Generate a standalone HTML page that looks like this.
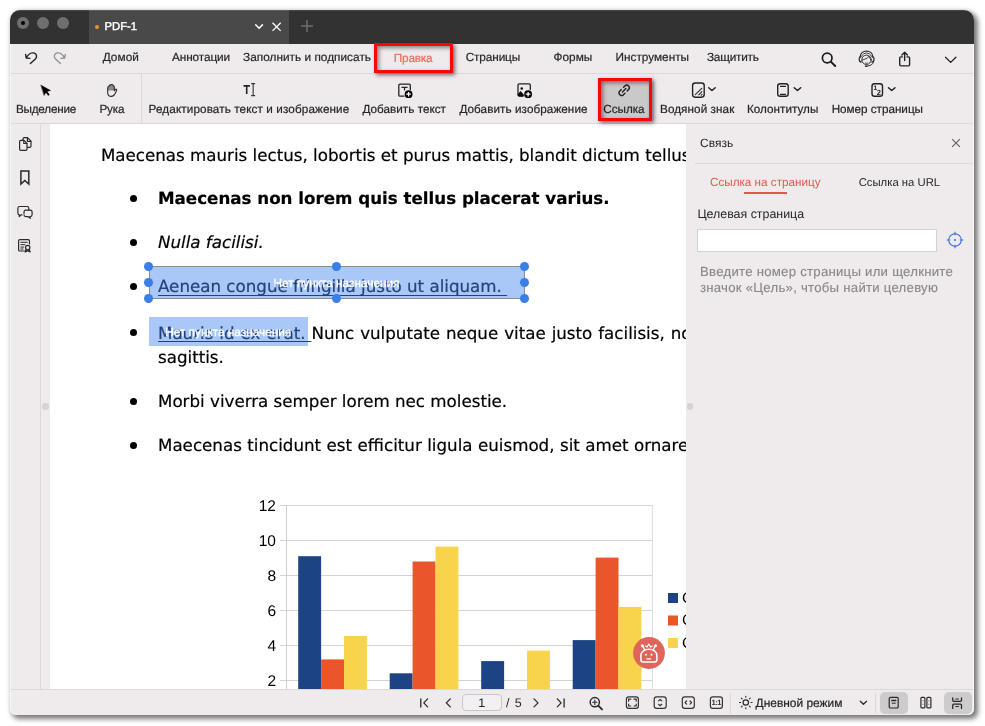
<!DOCTYPE html>
<html lang="ru">
<head>
<meta charset="utf-8">
<title>PDF-1</title>
<style>
*{box-sizing:border-box;margin:0;padding:0}
html,body{width:985px;height:726px;overflow:hidden;background:#fff}
body{text-rendering:geometricPrecision;font-family:"Liberation Sans",sans-serif;font-size:13px;color:#1d1d1d;position:relative}
.abs{position:absolute}
#win{will-change:transform;position:absolute;left:10px;top:10px;width:963.600px;height:705px;border-radius:10px 10px 6px 6px;background:#efebec;box-shadow:3px 3px 5px 1px rgba(0,0,0,.5),0 0 6px rgba(0,0,0,.1);overflow:hidden}
#title{position:absolute;left:0;top:0;width:964px;height:33.600px;background:#323232}
#tab{position:absolute;left:79px;top:0;width:200.200px;height:33.600px;background:#494949}
.tl{position:absolute;top:7.4px;width:12px;height:12px;border-radius:50%;background:#6f6f6f}
#menu{position:absolute;left:0;top:34px;width:964px;height:29px;background:#efebec}
.mi{position:absolute;top:0;height:29px;line-height:27px;font-size:11.800px;color:#262626;-webkit-text-stroke:.2px currentColor;white-space:nowrap;transform:translateX(-50%)}
#tools{position:absolute;left:0;top:63px;width:964px;height:51px;border-top:1px solid #dcd8d9;border-bottom:1px solid #dcd8d9;background:#efebec}
.tb{position:absolute;top:0;height:49px;width:0;font-size:11.700px;color:#262626;-webkit-text-stroke:.2px #262626}
.tb span{position:absolute;left:0;top:27.700px;line-height:16px;white-space:nowrap;transform:translateX(-50%)}
.tb svg{position:absolute;left:0;top:0;overflow:visible}
#side{position:absolute;left:0;top:114px;width:31px;height:565px;border-right:1px solid #dcd8d9}
#page{position:absolute;left:40px;top:114px;width:636px;height:565px;background:#fff;overflow:hidden}
#panel{position:absolute;left:676px;top:114px;width:288px;height:565px;background:#efebec}
#bottom{position:absolute;left:0;top:679px;width:964px;height:26px;background:#efebec;border-top:1px solid #dcd8d9}
.doc{font-family:"DejaVu Sans","Liberation Sans",sans-serif;text-rendering:geometricPrecision;-webkit-text-stroke:.2px currentColor;font-size:16.710px;color:#000;white-space:nowrap;position:absolute;line-height:20px}
.bul{position:absolute;width:7px;height:7px;border-radius:50%;background:#000;left:80px}
.lnk{color:#24427a;text-decoration:underline;text-decoration-thickness:1px;text-underline-offset:2px}
.hd{position:absolute;width:9px;height:9px;border-radius:50%;background:#3b7de9}
.np{position:absolute;color:#fff;-webkit-text-stroke:.3px #fff;font-size:11.800px;white-space:nowrap;line-height:13px;text-align:center}
</style>
</head>
<body>
<div id="win">
  <div id="title">
    <div class="tl" style="left:7.3px"></div>
    <div class="abs" style="left:11.3px;top:11.4px;width:4px;height:4px;border-radius:50%;background:#000"></div>
    <div class="tl" style="left:27.1px"></div>
    <div class="tl" style="left:47px"></div>
    <div id="tab">
      <div class="abs" style="left:5.6px;top:14.6px;width:4px;height:4px;border-radius:50%;background:#f0922e"></div>
      <div class="abs" style="left:15.500px;top:8.500px;font-size:11.300px;color:#fff;-webkit-text-stroke:.4px #fff;line-height:16px">PDF-1</div>
    </div>
    <div class="abs" style="left:0;top:0;width:964px;height:1px;background:rgba(255,255,255,.11)"></div>
    <svg class="abs" style="left:0;top:0" width="964" height="34" viewBox="10 10 964 34" fill="none">
      <path d="M255.3 24.4 L259.1 28.2 L262.9 24.4" stroke="#fff" stroke-width="1.5"/>
      <path d="M272.5 22.7 L280.7 30.9 M280.7 22.7 L272.5 30.9" stroke="#fff" stroke-width="1.3"/>
      <path d="M307 20 V32 M301 26 H313" stroke="#6e6e6e" stroke-width="1.5"/>
    </svg>
  </div>

  <div id="menu">
    <svg class="abs" style="left:0;top:0" width="964" height="29" viewBox="10 44 964 29" fill="none" stroke-linecap="round" stroke-linejoin="round">
      <path d="M25.6 54.4 L26.2 58.0 L29.8 58.4 M26.4 57.8 C28.5 53.5 32.0 52.2 34.5 53.2 C36.8 54.2 37.2 57.0 35.6 58.8 L30.4 63.6" stroke="#222" stroke-width="1.400"/>
      <path d="M65.3 54.4 L64.7 58.0 L61.1 58.4 M64.5 57.8 C62.4 53.5 58.9 52.2 56.4 53.2 C54.1 54.2 53.7 57.0 55.3 58.8 L60.5 63.6" stroke="#8f8f8f" stroke-width="1.300"/>
      <circle cx="827.2" cy="58" r="4.8" stroke="#1c1c1c" stroke-width="1.7"/>
      <path d="M830.8 61.6 L835.2 66" stroke="#1c1c1c" stroke-width="2"/>
      <g stroke="#333" stroke-width="1">
        <circle cx="866.500" cy="59.800" r="4.700"/>
        <path d="M860.200 56.800 C860.600 49.200 872.400 49.200 872.800 56.800" stroke-width="1.300"/>
        <path d="M861.800 56 C863 52 870 52 871.200 56" stroke-width=".9"/>
        <path d="M861.100 56.600 C858.600 56.600 858.600 62 861.100 62 M871.900 56.600 C874.700 56.600 874.700 62 871.900 62" stroke-width="1.300"/>
        <path d="M862 60.200 L867.300 58.200 L868.700 56.200 L869.800 57.800 L870.900 60" stroke-width=".9"/>
        <path d="M873.500 62.200 C872.800 64.800 870 65.800 867 66.200" stroke-width="1"/>
        <path d="M865.300 62.900 C866 63.600 867.200 63.600 867.900 62.900" stroke-width=".9"/>
      </g>
      <ellipse cx="866.100" cy="66.200" rx="1.300" ry=".9" fill="#333" stroke="none"/>
      <g stroke="#222" stroke-width="1.4">
        <path d="M902.3 56.9 H901 Q899.700 56.9 899.700 58.2 V64.6 Q899.700 65.9 901 65.9 H908.3 Q909.6 65.9 909.6 64.6 V58.2 Q909.6 56.9 908.3 56.900 H907"/>
        <path d="M904.650 60.5 V52.300 M901.9 54.9 L904.650 52.200 L907.4 54.900"/>
      </g>
      <path d="M945.5 57.200 L950.7 62.4 L955.9 57.200" stroke="#222" stroke-width="1.3"/>
    </svg>
    <div class="mi" style="left:110.8px;letter-spacing:0.069px">Домой</div>
    <div class="mi" style="left:191.0px;letter-spacing:-0.109px">Аннотации</div>
    <div class="mi" style="left:297.0px;letter-spacing:0.029px">Заполнить и подписать</div>
    <div class="mi" style="left:403.1px;letter-spacing:-0.21px;color:#e66c60;top:.7px">Правка</div>
    <div class="mi" style="left:482.9px;letter-spacing:-0.125px">Страницы</div>
    <div class="mi" style="left:562.9px;letter-spacing:0.062px">Формы</div>
    <div class="mi" style="left:642.3px;letter-spacing:0.002px">Инструменты</div>
    <div class="mi" style="left:722.8px;letter-spacing:-0.23px">Защитить</div>
  </div>

  <div id="tools">
    <div class="abs" style="left:131px;top:0;width:1px;height:49px;background:#dcd8d9"></div>
    <div class="abs" style="left:590px;top:5px;width:50px;height:40px;background:#c9c9c9"></div>
    <div class="abs" style="left:643px;top:0;width:1px;height:49px;background:#e3dfe0"></div>
    <svg class="abs" style="left:0;top:0" width="964" height="49" viewBox="10 74 964 49" fill="none" stroke="#222" stroke-width="1.3" stroke-linecap="round" stroke-linejoin="round" font-family="'Liberation Sans',sans-serif">
      <!-- select arrow -->
      <path d="M41.100 85.200 L50.500 90.500 L46.400 91.500 L44.200 95.200 Z" fill="#000" stroke="#000" stroke-width=".5"/>
      <path d="M46.300 91.600 L48.900 95.200" stroke="#000" stroke-width="1.900" stroke-linecap="butt"/>
      <!-- hand -->
      <path d="M108.200 90.600 H114.300 V87.300 Q114.300 86 113.200 85.700 Q112.600 84.500 111.300 84.600 Q110 84.600 109.500 85.500 Q107.700 86.300 107.700 88 V90.600 Z" fill="#8a8a8a" stroke="none"/>
      <path d="M107.700 88 Q107.700 86.500 109 86 L109.500 85.500 Q110 84.600 111.300 84.600 Q112.600 84.400 113.200 85.600 Q114.300 86 114.300 87.300 V90.800 L115.300 89.500 Q116 88.800 116.600 89.500 Q117 90.200 116.300 91.200 L114.600 94.400 Q113.400 96.400 111.300 96.400 Q107.700 96.400 107.700 92.500 Z" stroke-width="1.100" stroke="#2a2a2a"/>
      <!-- T| -->
      <path d="M243.500 85.900 H249.900 M246.700 85.900 V93.900" stroke-width="1.6" stroke-linecap="butt"/>
      <path d="M251.200 83.600 H255.100 M251.200 95.600 H255.100 M253.150 83.600 V95.600" stroke-width="1.1" stroke="#333" stroke-linecap="butt"/>
      <!-- add text -->
      <path d="M404 96.100 H400 Q398.800 96.100 398.800 94.900 V85.400 Q398.800 84.200 400 84.200 H409.100 Q410.300 84.200 410.300 85.400 V89.500"/>
      <path d="M401.500 87.300 H407.600 M404.550 87.300 V90.600" stroke-width="1.2" stroke-linecap="butt"/>
      <circle cx="408.600" cy="94.200" r="3.9" fill="#000" stroke="none"/>
      <path d="M406.300 94.200 H410.900 M408.600 91.900 V96.500" stroke="#fff" stroke-width="1.3" stroke-linecap="butt"/>
      <!-- add image -->
      <path d="M523 96.100 H519.300 Q518 96.100 518 94.800 V85.100 Q518 83.800 519.300 83.800 H529 Q530.300 83.800 530.300 85.100 V89.500"/>
      <path d="M518.200 94.200 L520.600 91.500 L523.300 94.600 L523.300 96 H519.200 Q518.200 96 518.200 95 Z" fill="#000" stroke="#000" stroke-width=".8"/>
      <circle cx="521.700" cy="88.400" r="1.25" fill="#000" stroke="none"/>
      <circle cx="528.100" cy="94.200" r="3.9" fill="#000" stroke="none"/>
      <path d="M525.800 94.200 H530.400 M528.100 91.900 V96.500" stroke="#fff" stroke-width="1.3" stroke-linecap="butt"/>
      <!-- link -->
      <g transform="translate(624.200 90.300) rotate(-45)" stroke-width="1.4">
        <path d="M-1.600 -2.600 H-3.600 A2.600 2.600 0 0 0 -3.600 2.600 H-1.600"/>
        <path d="M1.600 -2.600 H3.600 A2.600 2.600 0 0 1 3.600 2.600 H1.600"/>
        <path d="M-2.400 0 H2.400"/>
      </g>
      <!-- watermark -->
      <rect x="692.600" y="83" width="11.600" height="14.200" rx="2.600" stroke-width="1.4"/>
      <path d="M695.300 94.700 L701.700 88.300 M698.800 94.800 L701.800 91.700 M701.400 95 L701.900 94.500" stroke-width="1.200" stroke="#333"/>
      <path d="M708.700 87.700 L711.950 90.500 L715.200 87.700" stroke-width="1.500"/>
      <!-- header/footer -->
      <rect x="777.700" y="83.700" width="10.500" height="12.600" rx="2.600" stroke-width="1.4"/>
      <path d="M780 86.400 H785.900 M780 94.400 H785.900" stroke-width="1.1" stroke-linecap="butt"/>
      <path d="M794.200 87.700 L797.450 90.500 L800.700 87.700" stroke-width="1.500"/>
      <!-- page number -->
      <rect x="872" y="83.700" width="10.500" height="12.600" rx="2.600" stroke-width="1.4"/>
      <text x="873.600" y="89.800" font-size="6.500" fill="#222" stroke="none" font-weight="bold">1</text>
      <text x="876.800" y="95" font-size="7.500" fill="#222" stroke="none" font-weight="bold">2</text>
      <path d="M888.500 87.700 L891.750 90.500 L895 87.700" stroke-width="1.500"/>
    </svg>
    <div class="tb" style="left:36.0px;letter-spacing:-0.189px"><span>Выделение</span></div>
    <div class="tb" style="left:101.9px;letter-spacing:-0.184px"><span>Рука</span></div>
    <div class="tb" style="left:239.0px;letter-spacing:0.117px"><span>Редактировать текст и изображение</span></div>
    <div class="tb" style="left:394.2px;letter-spacing:0.039px"><span>Добавить текст</span></div>
    <div class="tb" style="left:513.5px;letter-spacing:0.076px"><span>Добавить изображение</span></div>
    <div class="tb" style="left:613.9px;letter-spacing:-0.003px"><span>Ссылка</span></div>
    <div class="tb" style="left:687.2px;letter-spacing:0.081px"><span>Водяной знак</span></div>
    <div class="tb" style="left:772.7px;letter-spacing:0.018px"><span>Колонтитулы</span></div>
    <div class="tb" style="left:867.3px;letter-spacing:-0.014px"><span>Номер страницы</span></div>
  </div>

  <div id="side"><svg class="abs" style="left:0;top:0" width="31" height="565" viewBox="10 124 31 565" fill="none" stroke="#2a2a2a" stroke-width="1.2" stroke-linecap="round" stroke-linejoin="round">
      <!-- pages -->
      <path d="M23 139.800 V139 Q23 137.700 24.300 137.700 H27.500 L31 141.200 V146 Q31 147.300 29.700 147.300 H27.300"/>
      <path d="M27.400 137.900 V141.300 H30.800"/>
      <path d="M20.900 140.300 H24 L27 143.300 V149 Q27 150.300 25.700 150.300 H20.900 Q19.600 150.300 19.600 149 V141.600 Q19.600 140.300 20.900 140.300 Z" fill="#efebec"/>
      <path d="M23.800 140.500 V143.500 H26.800"/>
      <!-- bookmark -->
      <path d="M20.900 171 H28.800 V184 L24.850 180.500 L20.900 184 Z" stroke-width="1.5" stroke-linejoin="miter"/>
      <!-- comments -->
      <path d="M24 213.400 V212 Q24 210.200 25.800 210.200 H30.300 Q32.100 210.200 32.100 212 V214.800 Q32.100 216.600 30.300 216.600 H30 L30.300 218.300 L28 216.600 H25.800 Q24 216.600 24 214.800"/>
      <path d="M22 214.900 H20.800 L19.300 216.600 L19.300 214.900 Q17.900 214.700 17.900 213.100 V208.300 Q17.900 206.500 19.700 206.500 H27 Q28.800 206.500 28.800 208.300 V210"/>
      <!-- certificate -->
      <path d="M25 251 H19.900 Q18.600 251 18.600 249.700 V241 Q18.600 239.700 19.900 239.700 H28.200 Q29.500 239.700 29.500 241 V244"/>
      <path d="M20.800 242.300 H27.300 M20.800 244.700 H25 M20.800 247.100 H23.700 M20.800 249 H23" stroke-width="1"/>
      <circle cx="27.700" cy="247.600" r="2.200"/>
      <path d="M26.200 249.400 L25.200 251.900 L27.700 250.600 L30.200 251.900 L29.200 249.400"/>
    </svg></div>
  <div class="abs" style="left:32.400px;top:393.400px;width:6.400px;height:6.400px;border-radius:50%;background:#d6d3d4"></div>

  <div id="page">
    <!-- link selections -->
    <div class="abs" style="left:98.500px;top:141.800px;width:376px;height:33px;background:#a9c8f8;border:1px solid #8c8c8c"></div>
    <div class="abs" style="left:99px;top:193px;width:158.500px;height:29.200px;background:#a9c8f8"></div>

    <div class="doc" style="left:50.900px;top:21px">Maecenas mauris lectus, lobortis et purus mattis, blandit dictum tellus sagittis</div>
    <div class="bul" style="top:71px"></div>
    <div class="doc" style="left:108px;top:64px;font-weight:bold">Maecenas non lorem quis tellus placerat varius.</div>
    <div class="bul" style="top:115px"></div>
    <div class="doc" style="left:108px;top:108px;font-style:italic">Nulla facilisi.</div>
    <div class="bul" style="top:159px"></div>
    <div class="doc lnk" style="left:108px;top:152px;text-underline-offset:3px">Aenean congue fringilla justo ut aliquam.&nbsp;</div>
    <div class="bul" style="top:205px"></div>
    <div class="doc" style="left:108px;top:198.600px;word-spacing:.63px"><span class="lnk">Mauris id ex erat.&nbsp;</span>Nunc vulputate neque vitae justo facilisis, non condimentum ante</div>
    <div class="doc" style="left:108px;top:223px">sagittis.</div>
    <div class="bul" style="top:274px"></div>
    <div class="doc" style="left:108px;top:267px">Morbi viverra semper lorem nec molestie.</div>
    <div class="bul" style="top:318px"></div>
    <div class="doc" style="left:108px;top:311px;word-spacing:.15px">Maecenas tincidunt est efficitur ligula euismod, sit amet ornare est vulputate.</div>

    <div class="np" style="left:98.500px;top:152.800px;width:376px">Нет пункта назначения</div>
    <div class="np" style="left:99px;top:202.200px;width:158.500px">Нет пункта назначения</div>
    <div class="hd" style="left:94px;top:137.500px"></div>
    <div class="hd" style="left:282px;top:137.500px"></div>
    <div class="hd" style="left:470px;top:137.500px"></div>
    <div class="hd" style="left:94px;top:153.800px"></div>
    <div class="hd" style="left:470px;top:153.800px"></div>
    <div class="hd" style="left:94px;top:170px"></div>
    <div class="hd" style="left:282px;top:170px"></div>
    <div class="hd" style="left:470px;top:170px"></div>

    <!-- chart -->
    <svg class="abs" style="left:190px;top:360px" width="446" height="205" viewBox="240 484 446 205" font-family="'Liberation Sans',sans-serif">
      <g stroke="#d4d4d4" stroke-width="1" fill="none">
        <path d="M280 505.5 H652.5 M280 540.5 H652.5 M280 575.5 H652.5 M280 610.5 H652.5 M280 645.5 H652.5 M280 680.5 H652.5"/>
        <path d="M286.5 505.5 V700" stroke="#cfcfcf"/><path d="M652.5 505.5 V700" stroke="#dedede"/>
      </g>
      <g fill="#1c4384">
        <rect x="298.2" y="556.2" width="22.9" height="160"/>
        <rect x="389.7" y="673.3" width="22.9" height="60"/>
        <rect x="481.2" y="661.1" width="22.9" height="60"/>
        <rect x="572.7" y="640.1" width="22.9" height="80"/>
        <rect x="668" y="593" width="10" height="10"/>
      </g>
      <g fill="#ea552b">
        <rect x="321.1" y="659.4" width="22.9" height="60"/>
        <rect x="412.6" y="561.5" width="22.9" height="160"/>
        <rect x="595.6" y="557.6" width="22.9" height="160"/>
        <rect x="668" y="615.5" width="10" height="10"/>
      </g>
      <g fill="#f7d44c">
        <rect x="344" y="636" width="22.9" height="80"/>
        <rect x="435.5" y="546.6" width="22.9" height="170"/>
        <rect x="527" y="650.6" width="22.9" height="70"/>
        <rect x="618.5" y="606.9" width="22.9" height="110"/>
        <rect x="668" y="638" width="10" height="10"/>
      </g>
      <g font-size="15.5" fill="#000" text-anchor="end">
        <text x="276" y="510.9">12</text>
        <text x="276" y="545.9">10</text>
        <text x="276" y="580.9">8</text>
        <text x="276" y="615.9">6</text>
        <text x="276" y="650.9">4</text>
        <text x="276" y="685.9">2</text>
      </g>
      <g font-size="15.5" fill="#000">
        <text x="682" y="602.8">Column 1</text>
        <text x="682" y="625.3">Column 2</text>
        <text x="682" y="647.8">Column 3</text>
      </g>
    </svg>

    <!-- assistant button -->
    <svg class="abs" style="left:582px;top:511.700px" width="34" height="34" viewBox="632 635.700 34 34" fill="none" stroke="#fff" stroke-width="1.500" stroke-linecap="round" stroke-linejoin="round">
      <circle cx="649" cy="652.700" r="15.900" fill="#e0645a" stroke="none"/>
      <path d="M640.900 655.400 C640.900 646.800 656.900 646.800 656.900 655.400 V659.400 Q656.900 661.600 654.700 661.600 H643.100 Q640.900 661.600 640.900 659.400 Z"/>
      <path d="M642.600 645.800 L644.600 649.300 M655.200 645.800 L653.200 649.300" stroke-width="1.200"/>
      <circle cx="642.300" cy="645.400" r="1.500" fill="#fff" stroke="none"/>
      <circle cx="655.500" cy="645.400" r="1.500" fill="#fff" stroke="none"/>
      <path d="M645.300 645.700 L647 646.800 L648.850 643.700 L650.700 646.800 L652.400 645.700" stroke-width="1.100"/>
      <rect x="645.100" y="653.500" width="1.700" height="1.800" fill="#fff" stroke="none"/>
      <rect x="650.600" y="653.500" width="1.700" height="1.800" fill="#fff" stroke="none"/>
      <path d="M646.500 658.600 H651.100" stroke-width="1.300" stroke-linecap="butt"/>
    </svg>
  </div>

  <div id="panel">
    <div class="abs" style="left:14px;top:10.700px;font-size:12px;line-height:16px;color:#262626">Связь</div>
    <svg class="abs" style="left:264.700px;top:13.900px" width="10" height="10" viewBox="0 0 10 10"><path d="M1.100 1.100 L8.900 8.900 M8.900 1.100 L1.100 8.900" stroke="#5e5e5e" stroke-width="1.100" fill="none"/></svg>
    <div class="abs" style="left:9px;top:39px;width:279px;height:1px;background:#dcd8d9"></div>
    <div class="abs" style="left:24px;top:50.500px;font-size:11.700px;line-height:16px;color:#e0584b;white-space:nowrap">Ссылка на страницу</div>
    <div class="abs" style="left:57.500px;top:68px;width:43.500px;height:2px;background:#e0584b"></div>
    <div class="abs" style="left:172.700px;top:50.500px;font-size:11.300px;line-height:16px;color:#262626;white-space:nowrap">Ссылка на URL</div>
    <div class="abs" style="left:11.400px;top:81.800px;font-size:12.400px;line-height:16px;color:#262626;white-space:nowrap">Целевая страница</div>
    <div class="abs" style="left:11px;top:105px;width:240px;height:23px;background:#fff;border:1px solid #d6d2d3"></div>
    <svg class="abs" style="left:259.200px;top:106.300px" width="20" height="20" viewBox="-10 -10 20 20" fill="none" stroke="#2f6fe4" stroke-width="1.1"><circle r="6.300"/><path d="M0 -8.300 V-4.800 M0 8.300 V4.800 M-8.300 0 H-4.800 M8.300 0 H4.800"/><circle r="1" fill="#2f6fe4" stroke="none"/></svg>
    <div class="abs" style="left:14px;top:140.300px;font-size:13.200px;letter-spacing:.25px;line-height:15.600px;color:#898787;-webkit-text-stroke:.12px #898787;white-space:nowrap">Введите номер страницы или щелкните<br>значок «Цель», чтобы найти целевую</div>
    <div class="abs" style="left:1.100px;top:279.300px;width:6.400px;height:6.400px;border-radius:50%;background:#d6d3d4"></div>
  </div>

  <div id="bottom">
    <div class="abs" style="left:870px;top:2px;width:27.600px;height:21.500px;border-radius:5px;background:#cdcbcc"></div>
    <div class="abs" style="left:934px;top:2px;width:27.600px;height:21.500px;border-radius:5px;background:#cdcbcc"></div>
    <div class="abs" style="left:452.300px;top:4.200px;width:39.400px;height:16.600px;border:1px solid #c9c4d2;border-radius:4px;background:#f3f0f3"></div>
    <div class="abs" style="left:452.300px;top:5px;width:38.800px;font-size:12.500px;line-height:16px;text-align:center;color:#262626">1</div>
    <div class="abs" style="left:496px;top:5px;font-size:12.500px;line-height:16px;color:#262626;white-space:nowrap;word-spacing:1.800px">/ 5</div>
    <div class="abs" style="left:720.100px;top:2.500px;width:1px;height:21px;background:#dcd8d9"></div>
    <div class="abs" style="left:745.600px;top:5px;font-size:11.950px;line-height:16px;color:#262626;white-space:nowrap;-webkit-text-stroke:.2px #262626">Дневной режим</div>
    <div class="abs" style="left:865px;top:2.500px;width:1px;height:21px;background:#dcd8d9"></div>
    <svg class="abs" style="left:0;top:0" width="964" height="26" viewBox="10 690 964 26" fill="none" stroke="#2a2a2a" stroke-width="1.300" stroke-linecap="round" stroke-linejoin="round" font-family="'Liberation Sans',sans-serif">
      <path d="M420.800 698.800 V707 M427.600 698.900 L423.800 702.900 L427.600 706.900"/>
      <path d="M450.300 698.900 L446.300 702.900 L450.300 706.900"/>
      <path d="M534 698.900 L538 702.900 L534 706.900"/>
      <path d="M564.100 698.800 V707 M557.300 698.900 L561.100 702.900 L557.300 706.900"/>
      <circle cx="594.800" cy="702.200" r="4.600" stroke-width="1.500"/>
      <path d="M598.300 705.700 L602 709.400" stroke-width="1.900"/>
      <path d="M592.600 702.200 H597 M594.800 700 V704.400" stroke-width="1.100"/>
      <g stroke-width="1.200" stroke="#333">
        <rect x="626.400" y="696.800" width="12" height="11.600" rx="2.400"/>
        <path d="M628.600 701.200 V699.200 H630.800 M634 699.200 H636.200 V701.200 M636.200 704 V706 H634 M630.800 706 H628.600 V704"/>
        <rect x="654.200" y="696.800" width="12" height="11.600" rx="2.400"/>
        <path d="M658.600 700.900 L660.200 699.500 L661.800 700.900 M658.600 704.300 L660.200 705.700 L661.800 704.300"/>
        <rect x="682.300" y="696.800" width="12" height="11.600" rx="2.400"/>
        <path d="M686.600 701 L685 702.600 L686.600 704.200 M690 701 L691.600 702.600 L690 704.200"/>
        <rect x="710.400" y="696.800" width="12" height="11.600" rx="2.400"/>
      </g>
      <text x="716.300" y="705.300" font-size="7.600" font-weight="bold" fill="#333" stroke="none" text-anchor="middle" letter-spacing="-.5">1:1</text>
      <!-- sun -->
      <circle cx="745.800" cy="702.500" r="2.700" stroke-width="1.200"/>
      <path d="M745.800 696.200 V697.300 M745.800 707.700 V708.800 M739.500 702.500 H740.600 M751 702.500 H752.100 M741.350 698.050 L742.100 698.800 M749.500 706.200 L750.250 706.950 M741.350 706.950 L742.100 706.200 M749.500 698.800 L750.250 698.050" stroke-width="1.100"/>
      <path d="M860.300 701.200 L863.400 704.200 L866.500 701.200" stroke-width="1.300"/>
      <!-- single page -->
      <rect x="889.200" y="697.300" width="9" height="10.700" rx="1.300" stroke-width="1.200"/>
      <path d="M891.200 700.500 H896.300" stroke-width="1.500" stroke-linecap="butt"/>
      <path d="M891.800 703.200 H895.700" stroke-width="1" stroke-linecap="butt"/>
      <!-- two page -->
      <rect x="920.900" y="697.300" width="4" height="10.600" rx="1" stroke-width="1.200"/>
      <rect x="926.900" y="697.300" width="4" height="10.600" rx="1" stroke-width="1.200"/>
      <path d="M922.900 700.500 V701.300 M922.900 703.800 V704.600 M928.900 700.500 V701.300 M928.900 703.800 V704.600" stroke-width=".9" stroke-linecap="butt"/>
      <!-- scroll -->
      <path d="M952.700 698 V700.300 Q952.700 701.400 953.800 701.400 H960.400 Q961.500 701.400 961.500 700.300 V698 M952.700 708.400 V705.300 Q952.700 704.200 953.800 704.200 H960.400 Q961.500 704.200 961.500 705.300 V708.400" stroke-width="1.300"/>
      <path d="M955.400 699 H958.800 M955.400 706.500 H958.800" stroke-width="1" stroke-linecap="butt"/>
    </svg>
  </div>
  <div class="abs" style="left:0;top:34px;width:963.600px;height:671px;border-radius:0 0 6px 6px;box-shadow:inset 1px 0 0 rgba(255,255,255,.6),inset -1px 0 0 rgba(255,255,255,.6);pointer-events:none"></div>
</div>

<!-- red highlight boxes -->
<div class="abs" style="left:374px;top:43px;width:79px;height:30px;border:3px solid #fb0505;box-shadow:2px 2px 4px rgba(0,0,0,.55),inset 2px 2px 4px rgba(0,0,0,.45)"></div>
<div class="abs" style="left:598px;top:78px;width:54px;height:43px;border:3px solid #fb0505;box-shadow:2px 2px 4px rgba(0,0,0,.55),inset 2px 2px 4px rgba(0,0,0,.45)"></div>
</body>
</html>
